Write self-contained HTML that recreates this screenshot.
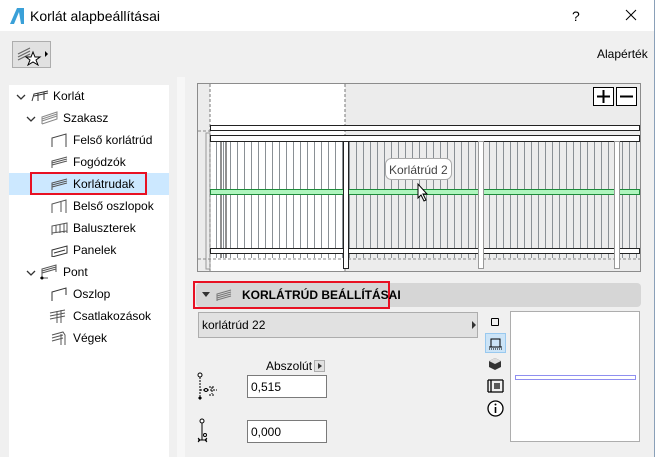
<!DOCTYPE html>
<html><head><meta charset="utf-8"><style>
*{margin:0;padding:0;box-sizing:border-box}
body{width:655px;height:457px;overflow:hidden;background:#f0f0f0;font-family:"Liberation Sans",Tahoma,sans-serif;font-size:12px;color:#000;position:relative}
.a{position:absolute}
.tree div{position:absolute;height:22px;line-height:22px;white-space:nowrap}
</style></head><body>
<div class="a" style="left:0;top:0;width:655px;height:31px;background:#fff;border-right:1px solid #8aa0b8"></div>
<svg class="a" style="left:8px;top:6px" width="18" height="20"><path d="M2 18 L9 2 L16 2 L16 18 Z" fill="#3aa0d8"/><path d="M6 18 L11 6 L13 18Z" fill="#fff"/></svg>
<div class="a" style="left:30px;top:8px;font-size:14px">Korlát alapbeállításai</div>
<div class="a" style="left:572px;top:8px;font-size:14px">?</div>
<svg class="a" style="left:625px;top:9px" width="12" height="12"><path d="M1 1 L11 11 M11 1 L1 11" stroke="#000" stroke-width="1"/></svg>
<div class="a" style="left:654px;top:31px;width:1px;height:426px;background:#8aa0b8"></div>
<div class="a" style="left:12px;top:41px;width:39px;height:27px;border:1px solid #adadad;background:#e1e1e1"></div>
<svg class="a" style="left:16px;top:44px" width="34" height="22"><path d="M2 10 L14 4 M2 13 L14 7 M2 16 L14 10" stroke="#666" stroke-width="1.2"/><path d="M17 8 L19 13 L24 13 L20 16 L22 21 L17 18 L12 21 L14 16 L10 13 L15 13Z" fill="#fff" stroke="#000"/><path d="M29 7 L32 10 L29 13Z" fill="#000"/></svg>
<div class="a" style="left:597px;top:47px">Alapérték</div>
<div class="a" style="left:177px;top:77px;width:8px;height:380px;background:#f7f7f7"></div>
<div class="a" style="left:9px;top:85px;width:160px;height:372px;background:#fff"></div>
<div class="a" style="left:9px;top:173px;width:160px;height:22px;background:#cce8ff"></div>
<div class="a" style="left:30px;top:172px;width:117px;height:23px;border:2px solid #e81123"></div>
<div class="tree">
<svg class="a" style="left:16px;top:94px" width="10" height="6"><path d="M1 1 L5 5 L9 1" stroke="#333" fill="none" stroke-width="1.3"/></svg>
<svg class="a" style="left:31px;top:90px" width="20" height="12"><path d="M1 11 L3 4 L17 1 M3 6 L17 3 M7 11 V3 M13 10 V2" stroke="#333" fill="none"/></svg>
<div style="left:53px;top:85px">Korlát</div>
<svg class="a" style="left:26px;top:116px" width="10" height="6"><path d="M1 1 L5 5 L9 1" stroke="#333" fill="none" stroke-width="1.3"/></svg>
<svg class="a" style="left:41px;top:111px" width="18" height="14"><path d="M1 13 V6 L16 1 V8 L1 13 M1 8 L16 3 M1 10 L16 5" stroke="#888" fill="none"/></svg>
<div style="left:63px;top:107px">Szakasz</div>
<svg class="a" style="left:51px;top:133px" width="18" height="14"><path d="M1 14 V5 L15 1 V14" stroke="#444" fill="none"/></svg>
<div style="left:73px;top:129px">Felső korlátrúd</div>
<svg class="a" style="left:51px;top:155px" width="18" height="14"><path d="M1 13 V6 L16 2 M1 8 L16 4 M1 10 L16 6" stroke="#555" fill="none"/></svg>
<div style="left:73px;top:151px">Fogódzók</div>
<svg class="a" style="left:51px;top:177px" width="18" height="14"><path d="M1 13 V6 L16 2 M1 8 L16 4 M1 10 L16 6" stroke="#555" fill="none"/></svg>
<div style="left:73px;top:173px">Korlátrudak</div>
<svg class="a" style="left:51px;top:199px" width="18" height="14"><path d="M1 14 V5 L15 1 V14 M10 13 V3" stroke="#555" fill="none"/></svg>
<div style="left:73px;top:195px">Belső oszlopok</div>
<svg class="a" style="left:51px;top:221px" width="18" height="14"><path d="M1 14 V5 L16 2 V12 M5 12 V4 M9 12 V3 M13 12 V3 M1 12 L16 10" stroke="#555" fill="none"/></svg>
<div style="left:73px;top:217px">Baluszterek</div>
<svg class="a" style="left:51px;top:243px" width="18" height="14"><path d="M1 14 V7 L16 3 V10 L1 14 M3 10 L14 7" stroke="#333" fill="none"/></svg>
<div style="left:73px;top:239px">Panelek</div>
<svg class="a" style="left:26px;top:270px" width="10" height="6"><path d="M1 1 L5 5 L9 1" stroke="#333" fill="none" stroke-width="1.3"/></svg>
<svg class="a" style="left:39px;top:264px" width="20" height="16"><path d="M3 14 V5 L17 1 V8 M3 7 L17 3 M3 9 L17 5 M1 14 H9" stroke="#555" fill="none"/><circle cx="3" cy="14" r="1.5"/></svg>
<div style="left:63px;top:261px">Pont</div>
<svg class="a" style="left:51px;top:287px" width="18" height="14"><path d="M1 14 V5 L15 1 V8" stroke="#333" fill="none"/></svg>
<div style="left:73px;top:283px">Oszlop</div>
<svg class="a" style="left:49px;top:309px" width="20" height="14"><path d="M1 4 L16 1 M1 7 L16 4 M1 10 L16 7 M8 14 V2 M12 14 V1" stroke="#555" fill="none"/></svg>
<div style="left:73px;top:305px">Csatlakozások</div>
<svg class="a" style="left:51px;top:331px" width="18" height="14"><path d="M1 4 L12 1 L14 4 V14 M1 7 L12 4 M1 10 L12 7 M10 14 V3" stroke="#555" fill="none"/></svg>
<div style="left:73px;top:327px">Végek</div>
</div>
<!-- preview -->
<svg class="a" style="left:197px;top:83px" width="444" height="189">
<defs><pattern id="b" width="7" height="200" patternUnits="userSpaceOnUse"><line x1="5.5" y1="0" x2="5.5" y2="200" stroke="#8a9095" stroke-width="1"/></pattern></defs>
<rect x="0.5" y="0.5" width="443" height="188" fill="#ececec" stroke="#8c8c8c"/>
<rect x="13" y="1" width="135" height="187" fill="#fff"/>
<rect x="13" y="58" width="430" height="117" fill="url(#b)"/>
<line x1="13" y1="58" x2="13" y2="175" stroke="#222"/>
<line x1="24" y1="58" x2="24" y2="175" stroke="#222"/>
<line x1="29" y1="58" x2="29" y2="175" stroke="#222"/>
<rect x="9" y="50" width="4" height="136" fill="none" stroke="#999"/>
<line x1="13" y1="1" x2="13" y2="188" stroke="#777" stroke-dasharray="3,2"/>
<line x1="148" y1="1" x2="148" y2="188" stroke="#777" stroke-dasharray="3,2"/>
<line x1="1" y1="176" x2="443" y2="176" stroke="#888" stroke-dasharray="3,2"/>
<line x1="1" y1="48" x2="13" y2="48" stroke="#888" stroke-dasharray="3,2"/>
<rect x="13.5" y="42.5" width="429" height="5" fill="#fff" stroke="#222"/>
<rect x="13.5" y="52.5" width="429" height="6" fill="#fff" stroke="#222"/>
<rect x="13.5" y="106.5" width="429" height="5" fill="#aef5bd" stroke="#1d8a3a"/>
<rect x="13.5" y="165.5" width="429" height="5" fill="#fff" stroke="#222"/>
<rect x="146.5" y="58.5" width="5" height="127" fill="#fff" stroke="#222"/>
<rect x="281.5" y="58.5" width="5" height="127" fill="#fff" stroke="#999"/>
<rect x="417.5" y="58.5" width="5" height="127" fill="#fff" stroke="#999"/>
<rect x="188.5" y="75.5" width="66" height="21" rx="6" fill="#fff" stroke="#aaa"/>
<text x="192" y="91" font-family="Liberation Sans" font-size="12" fill="#444">Korlátrúd 2</text>
<path d="M221 101 V115 L224 112 L227 118 L229 117 L226 111 L230 111Z" fill="#fff" stroke="#000"/>
<rect x="396.5" y="4.5" width="20" height="18" fill="#fff" stroke="#000"/>
<path d="M400 13.5 H413 M406.5 7 V20" stroke="#000" stroke-width="2"/>
<rect x="419.5" y="4.5" width="20" height="18" fill="#fff" stroke="#000"/>
<path d="M423 13.5 H436" stroke="#000" stroke-width="2"/>
</svg>
<!-- section header -->
<div class="a" style="left:196px;top:283px;width:445px;height:24px;background:#d6d6d6;border-radius:4px"></div>
<div class="a" style="left:193px;top:281px;width:197px;height:28px;border:2px solid #e81123"></div>
<div class="a" style="left:202px;top:292px;width:0;height:0;border-left:4px solid transparent;border-right:4px solid transparent;border-top:5px solid #333"></div>
<svg class="a" style="left:216px;top:288px" width="16" height="14"><path d="M1 13 V6 L15 2 M1 8 L15 4 M1 10 L15 6 M1 12 L15 8" stroke="#777" fill="none"/></svg>
<div class="a" style="left:242px;top:288px;font-weight:bold;font-size:12px">KORLÁTRÚD BEÁLLÍTÁSAI</div>
<div class="a" style="left:198px;top:312px;width:280px;height:26px;background:#e1e1e1;border:1px solid #adadad"></div>
<div class="a" style="left:202px;top:318px">korlátrúd 22</div>
<div class="a" style="left:472px;top:321px;border-top:4px solid transparent;border-bottom:4px solid transparent;border-left:4px solid #333"></div>
<div class="a" style="left:491px;top:318px;width:8px;height:8px;border:1px solid #000;border-radius:1px"></div>
<div class="a" style="left:485px;top:333px;width:21px;height:20px;background:#cce4f7;border:1px solid #99c9ef"></div>
<svg class="a" style="left:487px;top:335px" width="17" height="16"><path d="M4 12 V4 H13 V12 M2 12 H15" stroke="#000" fill="none"/><path d="M2 14 H15" stroke="#000" stroke-dasharray="1,1"/></svg>
<svg class="a" style="left:488px;top:357px" width="14" height="14"><path d="M7 1 L13 4 V10 L7 13 L1 10 V4Z" fill="#333"/><path d="M7 1 L13 4 L7 7 L1 4Z" fill="#ddd"/></svg>
<svg class="a" style="left:487px;top:379px" width="17" height="14"><path d="M1 1 V13 M16 1 V13 M1 1 H16 M1 13 H16 M4 1 V13 M7 5 H13 M7 7 H13 M7 9 H13" stroke="#000" fill="none" stroke-width="1.3"/></svg>
<svg class="a" style="left:487px;top:400px" width="17" height="17"><circle cx="8.5" cy="8.5" r="7.5" fill="#fff" stroke="#000" stroke-width="1.3"/><path d="M8.5 7 V13" stroke="#000" stroke-width="1.6"/><circle cx="8.5" cy="4.5" r="1"/></svg>
<div class="a" style="left:510px;top:311px;width:130px;height:131px;background:#fff;border:1px solid #adadad"></div>
<div class="a" style="left:515px;top:375px;width:121px;height:5px;border:1px solid #8f8ff0"></div>
<div class="a" style="left:266px;top:359px">Abszolút</div>
<div class="a" style="left:314px;top:360px;width:11px;height:12px;background:#e1e1e1;border:1px solid #adadad"></div>
<div class="a" style="left:318px;top:363px;border-top:3px solid transparent;border-bottom:3px solid transparent;border-left:4px solid #333"></div>
<svg class="a" style="left:197px;top:372px" width="24" height="30"><circle cx="3" cy="3" r="2" fill="#fff" stroke="#000"/><path d="M3 5 V25 M3 18 H8 M10 18 H20 M15 15 V22 M12 15 H18 M12 23 H18" stroke="#000" fill="none" stroke-dasharray="2,1"/><circle cx="9" cy="18" r="1.5" fill="#fff" stroke="#000"/><path d="M1 26 L3 24 L5 26 L3 28Z" fill="#000"/></svg>
<div class="a" style="left:247px;top:375px;width:80px;height:23px;background:#fff;border:1px solid #7a7a7a"></div>
<div class="a" style="left:251px;top:380px">0,515</div>
<svg class="a" style="left:197px;top:418px" width="16" height="26"><circle cx="5" cy="3" r="2" fill="#fff" stroke="#000"/><path d="M5 5 V22 M1 22 H10" stroke="#000" fill="none"/><circle cx="8" cy="17" r="1.5" fill="#fff" stroke="#000"/><path d="M1 20 L3 22 L1 24 M10 20 L8 22 L10 24" stroke="#000" fill="none"/></svg>
<div class="a" style="left:247px;top:420px;width:80px;height:23px;background:#fff;border:1px solid #7a7a7a"></div>
<div class="a" style="left:251px;top:425px">0,000</div>
</body></html>
